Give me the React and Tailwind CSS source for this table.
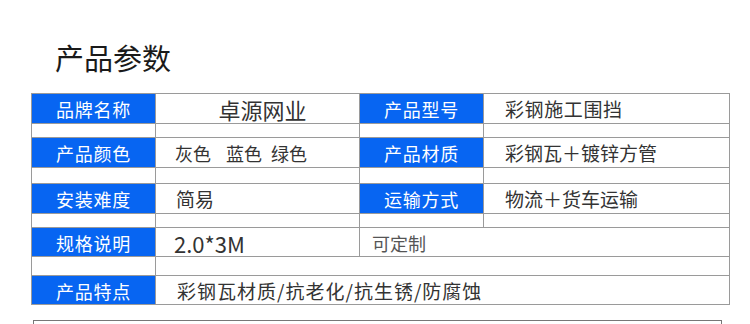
import React from "react";

const font = { fontFamily: '"Noto Sans CJK SC", "Noto Sans", sans-serif' };

function Label({ children }) {
  return (
    <div className="flex items-center justify-center pt-[2px] bg-[#0765f2] border-r border-b border-[#9a9a9a] text-white text-[18px] tracking-[0.8px]">
      {children}
    </div>
  );
}

function Cell({ children, className = "" }) {
  return (
    <div className={"flex items-center border-r border-b border-[#9a9a9a] text-[#333] " + (children ? "pt-[2px] " : "") + className}>
      {children}
    </div>
  );
}

export default function App() {
  return (
    <div className="w-[750px] h-[324px] bg-white overflow-hidden" style={font}>
      <div className="pt-[39px] pl-[55px] h-[93px]">
        <h1 className="text-[29px] leading-[36px] text-[#1a1a1a]">产品参数</h1>
      </div>
      <div className="ml-[31px] w-[699px] grid grid-cols-[124px_204px_124px_1fr] grid-rows-[30px_14px_30px_16px_30px_14px_29px_19px_29px] border-l border-t border-[#9a9a9a]">
        <Label>品牌名称</Label>
        <Cell className="justify-center text-[22px] pl-[10px]">卓源网业</Cell>
        <Label>产品型号</Label>
        <Cell className="pl-[21px] text-[19px] tracking-[0.6px]">彩钢施工围挡</Cell>

        <Cell />
        <Cell />
        <Cell />
        <Cell />

        <Label>产品颜色</Label>
        <Cell className="pl-[19px] text-[18px]">
          <span>灰色</span>
          <span className="ml-[15px]">蓝色</span>
          <span className="ml-[9px]">绿色</span>
        </Cell>
        <Label>产品材质</Label>
        <Cell className="pl-[21px] text-[19px]">彩钢瓦＋镀锌方管</Cell>

        <Cell />
        <Cell />
        <Cell />
        <Cell />

        <Label>安装难度</Label>
        <Cell className="pl-[20px] text-[19px]">简易</Cell>
        <Label>运输方式</Label>
        <Cell className="pl-[21px] text-[19px]">物流＋货车运输</Cell>

        <Cell />
        <Cell />
        <Cell />
        <Cell />

        <Label>规格说明</Label>
        <Cell className="pl-[18px] text-[22px] text-[#111]">2.0*3M</Cell>
        <Cell className="col-span-2 pl-[12px] text-[18px] text-[#555]">可定制</Cell>

        <Cell />
        <Cell className="col-span-3" />

        <Label>产品特点</Label>
        <Cell className="col-span-3 pl-[21px] text-[19px] tracking-[1px]">彩钢瓦材质/抗老化/抗生锈/防腐蚀</Cell>
      </div>
      <div className="mt-[15px] ml-[33px] w-[689px] h-[20px] border-t border-l border-r border-[#777]" />
    </div>
  );
}
